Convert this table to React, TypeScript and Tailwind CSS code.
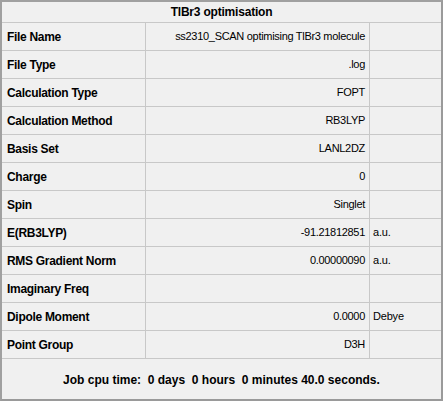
import React from "react";

const rows: [string, string, string][] = [
  ["File Name", "ss2310_SCAN optimising TlBr3 molecule", ""],
  ["File Type", ".log", ""],
  ["Calculation Type", "FOPT", ""],
  ["Calculation Method", "RB3LYP", ""],
  ["Basis Set", "LANL2DZ", ""],
  ["Charge", "0", ""],
  ["Spin", "Singlet", ""],
  ["E(RB3LYP)", "-91.21812851", "a.u."],
  ["RMS Gradient Norm", "0.00000090", "a.u."],
  ["Imaginary Freq", "", ""],
  ["Dipole Moment", "0.0000", "Debye"],
  ["Point Group", "D3H", ""],
];

export default function App() {
  return (
    <div
      className="w-[443px] h-[401px] bg-[#f0f0f0] text-[11px] text-black flex flex-col border-t-2 border-l-2 border-r-2 border-b-2 border-t-[#a0a0a0] border-l-[#a0a0a0] border-r-[#9a9a9a] border-b-[#9a9a9a]"
      style={{ fontFamily: '"Liberation Sans", Arial, sans-serif' }}
    >
      <div className="h-[21px] flex items-center justify-center font-bold text-[12px] tracking-[-0.2px] border-b border-[#c8c8c8]">
        TlBr3 optimisation
      </div>
      {rows.map(([label, value, unit]) => (
        <div key={label} className="h-[28px] flex border-b border-[#c8c8c8]">
          <div className="w-[144px] flex items-center pl-[5px] font-bold text-[12px] tracking-[-0.3px] border-r border-[#c8c8c8]">
            {label}
          </div>
          <div className="w-[224px] flex items-center justify-end pr-[4px] tracking-[-0.3px] border-r border-[#c8c8c8]">
            {value}
          </div>
          <div className="flex-1 flex items-center pl-[3px] tracking-[-0.2px]">{unit}</div>
        </div>
      ))}
      <div className="flex-1 flex items-center justify-center font-bold text-[12px] whitespace-pre pt-[1px]">
        {"Job cpu time:  0 days  0 hours  0 minutes 40.0 seconds."}
      </div>
    </div>
  );
}
